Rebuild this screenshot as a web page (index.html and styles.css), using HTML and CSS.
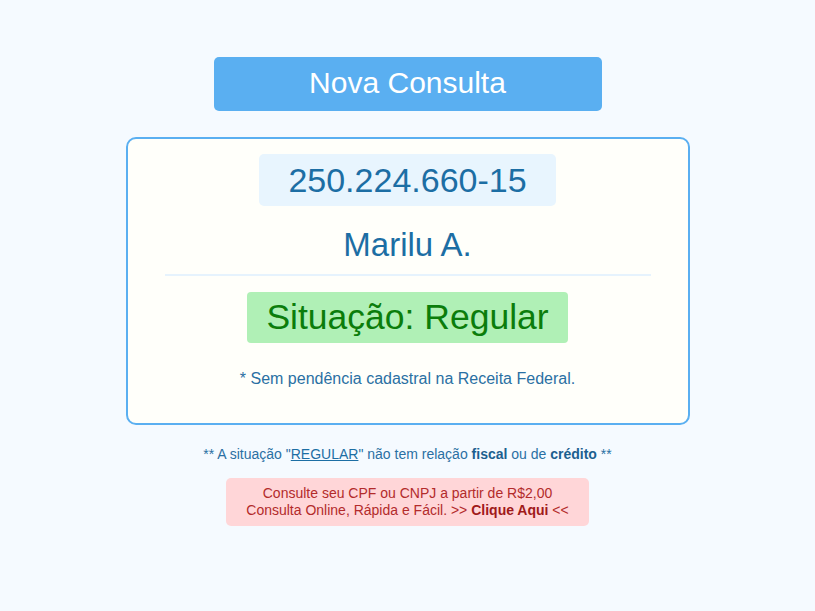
FILE: index.html
```html
<!DOCTYPE html>
<html lang="pt-BR">
<head>
<meta charset="utf-8">
<title>Consulta CPF</title>
<link rel="stylesheet" href="styles.css">
</head>
<body>
<main class="page">
  <a class="btn-nova" href="#">Nova Consulta</a>
  <section class="card">
    <div class="cpf">250.224.660-15</div>
    <div class="nome">Marilu A.</div>
    <hr class="divider">
    <div class="situacao">Situação: Regular</div>
    <p class="nota">* Sem pendência cadastral na Receita Federal.</p>
  </section>
  <p class="aviso">** A situação "<u>REGULAR</u>" não tem relação <b>fiscal</b> ou de <b>crédito</b> **</p>
  <a class="promo" href="#">Consulte seu CPF ou CNPJ a partir de R$2,00<br>Consulta Online, Rápida e Fácil. &gt;&gt; <b>Clique Aqui</b> &lt;&lt;</a>
</main>
</body>
</html>
```

FILE: styles.css
```css
* { box-sizing: border-box; }
html, body { margin: 0; padding: 0; }
body {
  background: #f5faff;
  font-family: "Liberation Sans", Arial, sans-serif;
  color: #1d6ea3;
}
.page {
  display: flex;
  flex-direction: column;
  align-items: center;
  padding-top: 57px;
}
.btn-nova {
  display: block;
  width: 388px;
  height: 54px;
  line-height: 52px;
  background: #5aaff1;
  color: #fff;
  text-align: center;
  font-size: 30px;
  text-decoration: none;
  border-radius: 5px;
}
.card {
  margin-top: 26px;
  width: 564px;
  height: 288px;
  border: 2px solid #5aaff1;
  border-radius: 10px;
  background: #fffffa;
  display: flex;
  flex-direction: column;
  align-items: center;
  padding-top: 15px;
}
.cpf {
  background: #e8f5fe;
  border-radius: 5px;
  width: 297px;
  height: 52px;
  line-height: 52px;
  text-align: center;
  font-size: 34px;
  color: #1c6ea4;
}
.nome {
  margin-top: 19px;
  height: 40px;
  line-height: 40px;
  font-size: 33px;
  color: #1c6ea4;
}
.divider {
  align-self: stretch;
  margin: 9px 37px 0;
  border: 0;
  height: 2px;
  background: #e6f3fd;
}
.situacao {
  margin-top: 16px;
  width: 321px;
  height: 51px;
  line-height: 51px;
  text-align: center;
  font-size: 35.5px;
  background: #b0f0b6;
  color: #0b7d0b;
  border-radius: 4px;
}
.nota {
  margin: 26px 0 0;
  font-size: 16px;
  line-height: 20px;
  color: #2a70a3;
}
.aviso {
  margin: 20px 0 0;
  font-size: 14px;
  line-height: 18px;
  color: #2a70a3;
}
.aviso b { color: #1c5f8f; }
.aviso u { color: #1c6ea4; }
.promo {
  margin-top: 15px;
  width: 363px;
  height: 48px;
  padding-top: 7px;
  background: #ffd6d8;
  border-radius: 5px;
  color: #b32b2b;
  text-align: center;
  font-size: 14px;
  line-height: 17px;
  text-decoration: none;
}
.promo b { color: #a01a1a; }
```
